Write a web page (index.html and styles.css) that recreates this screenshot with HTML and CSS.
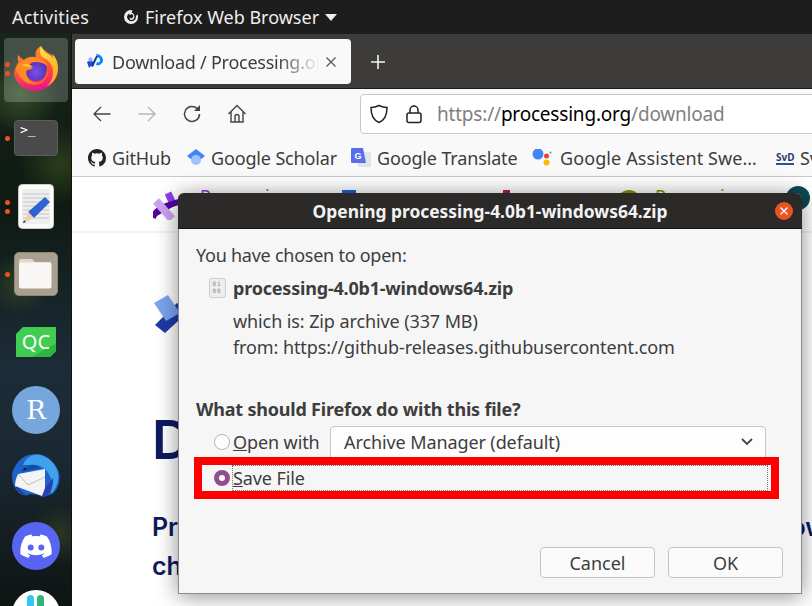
FILE: index.html
```html
<!DOCTYPE html>
<html>
	<head>
		<meta charset="utf-8" />
		<title>Download / Processing.org</title>
		<link rel="stylesheet" href="styles.css">
	</head>
	<body>
		<div class="topbar">
			<span class="activities">Activities</span>
			<span class="app-menu">
				<svg class="app-icon" width="16" height="16" viewBox="0 0 16 16"><path fill="#eee" d="M8 1a7 7 0 1 0 7 7c0-1-.2-1.900-.6-2.700L13 7a5 5 0 0 1-2 4.500A4.500 4.500 0 0 1 4 8c0-1.500 1-3 2.500-3.600L6 6l3-1 1.500 2L9 9.500 6.500 8.500 7.500 11c2 .5 4-1 4-3.200 0-2-1.500-3.800-3-4.300l1-1.800C9 1.300 8.500 1 8 1z"/></svg>
				Firefox Web Browser
				<i class="caret"></i>
			</span>
		</div>
		<div class="main">
			<div class="dock">
				<div class="dock-item active">
					<i class="dot dot-a"></i><i class="dot dot-b"></i>
					<svg width="48" height="48" viewBox="0 0 48 48">
						<defs>
							<linearGradient id="ffBase" x1="0.3" y1="0" x2="0.5" y2="1"><stop offset="0" stop-color="#ff9a1f"/><stop offset="0.6" stop-color="#ff4a3f"/><stop offset="1" stop-color="#e3158f"/></linearGradient>
							<linearGradient id="ffFlame" x1="0.3" y1="0" x2="0.7" y2="1"><stop offset="0" stop-color="#ffe04a"/><stop offset="1" stop-color="#ffa020"/></linearGradient>
							<radialGradient id="ffBall" cx="0.5" cy="0.6" r="0.6"><stop offset="0" stop-color="#7d52e6"/><stop offset="1" stop-color="#4f2bb0"/></radialGradient>
						</defs>
						<path fill="url(#ffBase)" d="M6 9c-.5 3-.5 5 .5 7C3.500 20 2 25 2 28c1.500 10 11 17 22 17s22-10 22-22c0-8-4-13-8-15-3-2-7-4-9-8-6 3-6 9-5 11-6-1-10 1-12 3-2-1-4-3-6-5z"/>
						<path fill="url(#ffFlame)" d="M29 0c-2 6-1 10 3 12 6 3 9 8 9 14 0 6-2 10-6 14 7-3 11-10 11-18 0-7-3-12-6-14l2 6c-3-5-6-6-8-7-2-2-4-4-5-7z"/>
						<circle cx="24" cy="24" r="11" fill="url(#ffBall)"/>
						<path fill="#ff8a24" d="M4 24c0-4 3-8 7-9 4-4 11-5 16-3 4 2 7 4 8 8-3-3-7-4-11-4-3 0-6 1-7 3l4 2c-1 2-3 3-6 3-2 3 0 8 4 11 4 2 9 2 13 0-5 5-14 5-20 0-4-3-6-7-8-11z"/>
						<path fill="#ffc93a" d="M10 19c3-2 7-1 10 1-3 1-7 1-10-1z"/>
						<path fill="#ff5a30" d="M35 20c2 5 1 11-3 15-5 4-11 5-16 2 7 1 13-1 16-5 2-3 3-7 3-12z"/>
					</svg>
				</div>
				<div class="dock-item">
					<i class="dot dot-one"></i>
					<div class="terminal-icon">&gt;_</div>
				</div>
				<div class="dock-item">
					<i class="dot dot-a2"></i><i class="dot dot-b2"></i>
					<svg width="36" height="45" viewBox="0 0 36 45">
						<rect x="0.500" y="0.500" width="35" height="44" rx="4" fill="#fbfbf9" stroke="#ccc"/>
						<rect x="4" y="5" width="28" height="35" fill="#efefef"/>
						<path stroke="#c4c4c4" fill="none" d="M5 10h26M5 14h26M5 18h26M5 22h26M5 26h26M5 30h26M5 34h26"/>
						<path fill="#2f62d3" d="M27 13l5 5-16 16-6-6z"/>
						<path fill="#f3cfa5" d="M10 28l6 6-9 4z"/>
						<path fill="#333" d="M5 39l3-1-2-2z"/>
					</svg>
				</div>
				<div class="dock-item">
					<i class="dot dot-one"></i>
					<div class="files-icon">
						<svg width="34" height="30" viewBox="0 0 34 30">
							<path fill="#dcd8cf" d="M2 0h11l3 3h16v8H0V2a2 2 0 0 1 2-2z"/>
							<rect x="0" y="3.500" width="32.500" height="26" rx="2" fill="#f8f7f5"/>
						</svg>
					</div>
				</div>
				<div class="dock-item">
					<svg width="40" height="30" viewBox="0 0 40 30">
						<path fill="#41cd52" d="M7 0h33v24l-6 6H0V7z"/>
						<path fill="#2cb53f" d="M16 30l24-14v8l-6 6z"/>
						<text x="20" y="22" class="qc-text">QC</text>
					</svg>
				</div>
				<div class="dock-item"><div class="round r-icon">R</div></div>
				<div class="dock-item">
					<svg width="48" height="48" viewBox="0 0 48 48">
						<path fill="#1f62c8" d="M8 6C4 10 0 16 0 22c0 6 2 12 7 17 5 3 8 3 11 1l16 2c6-1 10-4 12-10 3-7 2-15-3-21C38 4 32 0 24 0 17 0 12 2 8 6z"/>
						<path fill="#3fa2ec" d="M11 11C14 3 21 0 28 1c9 2 16 9 18 18 1 8-1 15-7 21 0-4 2-8 0-15-2-8-9-14-17-14-4 0-8 0-11 0z"/>
						<path fill="#1b3a9a" d="M4 28c2 7 6 11 12 14-4-1-9-3-12-8z"/>
						<path fill="#2c3fae" d="M33 34l8-10c1 7-2 14-8 19-2 0-4 0-6-1z"/>
						<path fill="#f4f4f4" d="M6 20l27-5v19l-3 8L3 32c0-4 1-8 3-12z"/>
						<path fill="none" stroke="#9aa" stroke-width="0.700" d="M6 20l10 11 17-8"/>
						<path fill="#0f4fa8" d="M9 16l9-5c4-1 8 0 10 3l-18 4z"/>
						<circle cx="13" cy="15" r="1.300" fill="#123"/>
					</svg>
				</div>
				<div class="dock-item">
					<div class="round discord-icon">
						<svg width="32" height="24" viewBox="0 0 32 24">
							<path fill="#fff" d="M27 2.500A26 26 0 0 0 20.500.500l-.8 1.700a24 24 0 0 0-7.400 0L11.500.500A26 26 0 0 0 5 2.500C1 8.500 0 14.500.4 20.300A26 26 0 0 0 8.400 24l1.700-2.700-2.600-1.300.6-.5a19 19 0 0 0 15.800 0l.6.500-2.600 1.300 1.700 2.700a26 26 0 0 0 8-3.700C32.100 13.600 30.600 7.700 27 2.500z"/>
							<circle cx="10.700" cy="13.500" r="3" fill="#5865f2"/>
							<circle cx="21.300" cy="13.500" r="3" fill="#5865f2"/>
						</svg>
					</div>
				</div>
				<div class="dock-item">
					<div class="round slack-icon">
						<svg width="24" height="16" viewBox="0 0 24 16">
							<rect x="3" y="0" width="7" height="14" rx="3.500" fill="#36c5f0"/>
							<rect x="13" y="0" width="7" height="14" rx="3.500" fill="#2eb67d"/>
						</svg>
					</div>
				</div>
			</div>

			<div class="browser">
				<div class="tabstrip">
					<div class="tab">
						<svg class="tab-logo" width="18" height="16" viewBox="0 0 18 16">
							<path fill="#1c4fd0" d="M1 8l4-2 3 3-5 5z"/>
							<path fill="#8fb0f5" d="M2 5l3-2 2 3-3 2z"/>
							<path fill="#0a84ff" d="M10 0c4 0 7 3 7 6 0 4-4 6-7 5l1-3c2 1 3 0 3-2s-2-3-3-3z"/>
							<path fill="#15339b" d="M12 2l-5 11-2-1 5-10z"/>
						</svg>
						<span class="tab-title">Download / Processing.org</span>
						<svg class="tab-close" width="12" height="12" viewBox="0 0 12 12"><path stroke="#555" stroke-width="1.200" d="M1.500 1.500l9 9M10.500 1.500l-9 9"/></svg>
					</div>
					<svg class="new-tab" width="16" height="16" viewBox="0 0 16 16"><path stroke="#f2f2f2" stroke-width="1.600" d="M8 1v14M1 8h14"/></svg>
				</div>
				<div class="navbar">
					<svg class="nav-btn" width="20" height="20" viewBox="0 0 20 20"><path fill="none" stroke="#444" stroke-width="1.300" d="M18.500 10H2M9 3l-7 7 7 7"/></svg>
					<svg class="nav-btn" width="20" height="20" viewBox="0 0 20 20"><path fill="none" stroke="#b5b5b5" stroke-width="1.300" d="M1.500 10H18M11 3l7 7-7 7"/></svg>
					<svg class="nav-btn" width="20" height="20" viewBox="0 0 20 20"><path fill="none" stroke="#444" stroke-width="1.500" d="M17.500 10a7.500 7.500 0 1 1-2.500-5.600L17 6"/><path fill="#444" d="M18 1v6h-6z"/></svg>
					<svg class="nav-btn" width="20" height="20" viewBox="0 0 20 20"><path fill="none" stroke="#444" stroke-width="1.400" d="M1.500 10L10 1.500 18.500 10M4 8v10h12V8M8 18v-5.500a2 2 0 0 1 4 0V18"/></svg>
					<div class="urlbar">
						<svg width="20" height="20" viewBox="0 0 20 20"><path fill="none" stroke="#222" stroke-width="1.500" d="M10 1.500c3 1.500 5.500 2 8 2 0 8-2 12.500-8 15-6-2.500-8-7-8-15 2.500 0 5-.5 8-2z"/></svg>
						<svg class="lock" width="16" height="20" viewBox="0 0 16 20"><path fill="none" stroke="#222" stroke-width="1.500" d="M4 9V6a4 4 0 0 1 8 0v3"/><rect x="1" y="9" width="14" height="9.500" rx="2" fill="none" stroke="#222" stroke-width="1.500"/></svg>
						<span class="url">https://<b>processing.org</b>/download</span>
					</div>
				</div>
				<div class="bookmarks">
					<span class="bm bm-github">
						<svg width="18" height="18" viewBox="0 0 16 16"><path fill="#222" d="M8 0C3.580 0 0 3.580 0 8c0 3.540 2.290 6.530 5.470 7.590.4.070.55-.17.55-.38v-1.340c-2.230.48-2.700-1.070-2.700-1.070-.36-.92-.89-1.170-.89-1.170-.73-.5.050-.49.050-.49.800.060 1.230.82 1.230.82.720 1.220 1.870.87 2.330.66.070-.52.280-.87.510-1.070-1.780-.2-3.640-.89-3.640-3.950 0-.87.310-1.590.82-2.150-.08-.2-.36-1.020.08-2.120 0 0 .67-.21 2.200.82a7.600 7.600 0 0 1 4 0c1.530-1.040 2.200-.82 2.200-.82.440 1.100.16 1.920.08 2.120.51.560.82 1.270.82 2.150 0 3.070-1.870 3.750-3.650 3.950.29.250.54.730.54 1.480v2.190c0 .21.150.46.550.38A8 8 0 0 0 16 8c0-4.420-3.580-8-8-8z"/></svg>
						GitHub
					</span>
					<span class="bm bm-scholar">
						<svg width="18" height="18" viewBox="0 0 18 18"><path fill="#4285f4" d="M9 0l9 7-9 7-9-7z"/><circle cx="9" cy="11" r="5" fill="#a0c3ff"/></svg>
						Google Scholar
					</span>
					<span class="bm bm-translate">
						<svg width="20" height="20" viewBox="0 0 20 20"><rect x="7" y="4" width="13" height="15" rx="1" fill="#e4e4e4"/><path fill="#5a6ff0" d="M1 0h11l3 15H1a1 1 0 0 1-1-1V1a1 1 0 0 1 1-1z"/><text x="7" y="11" class="g-text">G</text></svg>
						Google Translate
					</span>
					<span class="bm bm-assistant">
						<svg width="20" height="18" viewBox="0 0 20 18"><circle cx="6" cy="5" r="5.500" fill="#4285f4"/><circle cx="14.500" cy="7" r="2.500" fill="#ea4335"/><circle cx="14.500" cy="13.500" r="3" fill="#fbbc05"/><circle cx="18.500" cy="3.500" r="1" fill="#34a853"/></svg>
						Google Assistent Swe…
					</span>
					<span class="bm bm-svd">
						<span class="svd-logo">SvD</span>
						SvD
					</span>
				</div>
				<div class="page">
					<div class="site-nav">
						<span class="site-link link-a">
							<svg width="30" height="30" viewBox="0 0 30 30"><path stroke="#8c3ff0" stroke-width="7" d="M15 3l5 11"/><path stroke="#5501a4" stroke-width="6" d="M0 28c2-8 10-12 30-17"/><path stroke="#cba2f5" stroke-width="8" d="M3 11l16 18"/></svg>
							<span class="site-label purple">Processing</span>
						</span>
						<span class="site-link link-b"><i class="mark mark-blue"></i></span>
						<span class="site-link link-c"><i class="mark mark-pink"></i></span>
						<span class="site-link link-d">
							<i class="mark mark-green"></i>
							<span class="site-label green">Processing</span>
						</span>
						<span class="site-link link-e"><i class="mark mark-teal"></i></span>
					</div>
					<div class="hero">
						<svg class="hero-logo" width="40" height="40" viewBox="0 0 40 40"><path fill="#1e3aa8" d="M1 30l22-22 12 8-24 22z"/><path fill="#7ba4f0" d="M0 8L14 0l12 18-14 8z"/></svg>
						<h1>Download Processing</h1>
						<p class="intro">Processing is available on Linux, Mac OS X, and Windows<br>choose the version for your platform and get started</p>
					</div>
				</div>
			</div>
		</div>

		<div class="dialog">
			<div class="dialog-title">
				<span>Opening processing-4.0b1-windows64.zip</span>
				<svg class="dialog-close" width="18" height="18" viewBox="0 0 18 18"><circle cx="9" cy="9" r="9" fill="#e95420"/><path stroke="#fff" stroke-width="1.400" d="M5.500 5.500l7 7M12.500 5.500l-7 7"/></svg>
			</div>
			<div class="dialog-body">
				<div class="chosen">You have chosen to open:</div>
				<div class="file-row">
					<svg width="18" height="20" viewBox="0 0 18 20">
						<rect x="0.500" y="0.500" width="16" height="19" rx="2" fill="#eee" stroke="#ccc"/>
						<text x="3.500" y="8" class="bin-text">01</text>
						<text x="3.500" y="15" class="bin-text">00</text>
					</svg>
					<strong>processing-4.0b1-windows64.zip</strong>
				</div>
				<div class="file-info">
					<div>which is: Zip archive (337 MB)</div>
					<div>from: https://github-releases.githubusercontent.com</div>
				</div>
				<div class="question">What should Firefox do with this file?</div>
				<div class="open-row">
					<label class="radio-label"><i class="radio"></i><span class="mnemonic">Open with</span></label>
					<div class="select">
						<span>Archive Manager (default)</span>
						<svg width="12" height="8" viewBox="0 0 12 8"><path fill="none" stroke="#444" stroke-width="1.800" d="M1 1l5 5 5-5"/></svg>
					</div>
				</div>
				<div class="save-row">
					<i class="radio checked"></i>
					<span class="save-focus mnemonic">Save File</span>
				</div>
				<div class="buttons">
					<button class="btn">Cancel</button>
					<button class="btn">OK</button>
				</div>
			</div>
		</div>
	</body>
</html>
```

FILE: styles.css
```css
*{
	margin:0px;
	padding:0px;
	box-sizing:border-box;
}
html,body{
	width:812px;
	height:606px;
	overflow:hidden;
}
body{
	font-family:"Noto Sans","DejaVu Sans",sans-serif;
	font-size:18px;
	color:#3d3d3d;
	background:#fff;
	display:flex;
	flex-direction:column;
	position:relative;
}
.topbar{
	height:34px;
	flex:none;
	background:#1d1d1d;
	color:#eee;
	display:flex;
	align-items:center;
	padding-left:12px;
}
.activities{
	width:111px;
	letter-spacing:0.2px;
}
.app-menu{
	display:flex;
	align-items:center;
}
.app-icon{
	margin-right:6px;
}
.caret{
	width:0;
	height:0;
	margin-left:6px;
	border-left:6px solid transparent;
	border-right:6px solid transparent;
	border-top:7px solid #eee;
}
.main{
	flex:1;
	display:flex;
	min-height:0;
}

/* dock */
.dock{
	width:72px;
	flex:none;
	overflow:hidden;
	padding-top:4px;
	display:flex;
	flex-direction:column;
	gap:4px;
	border-right:1px solid #111;
	background:
		radial-gradient(circle at 20px 60px,#36502a 0,transparent 40px),
		radial-gradient(circle at 60px 130px,#2a3d1a 0,transparent 40px),
		radial-gradient(circle at 20px 250px,#2e3f22 0,transparent 30px),
		radial-gradient(circle at 60px 500px,#2c3620 0,transparent 30px),
		linear-gradient(#17251a 0,#0f1a12 30%,#1c2c38 58%,#1a2832 75%,#0e1412 100%);
}
.dock-item{
	height:64px;
	width:64px;
	margin-left:4px;
	flex:none;
	display:flex;
	align-items:center;
	justify-content:center;
	position:relative;
	border-radius:4px;
}
.dock-item.active{
	background:rgba(255,255,255,0.2);
}
.dot{
	position:absolute;
	left:1px;
	width:5px;
	height:5px;
	border-radius:50%;
	background:#e95420;
}
.dot-one{top:30px;}
.dot-a{top:24px;}
.dot-b{top:33px;}
.dot-a2{top:26px;}
.dot-b2{top:35px;}
.terminal-icon{
	width:44px;
	height:36px;
	background:#4a4a4a;
	border:1px solid #5c5c5c;
	border-radius:4px;
	color:#fff;
	font-family:"DejaVu Sans Mono",monospace;
	font-size:13px;
	line-height:14px;
	padding:2px 0 0 5px;
}
.files-icon{
	width:44px;
	height:44px;
	background:#a9a08f;
	border:1px solid #8d8676;
	border-radius:5px;
	display:flex;
	align-items:center;
	justify-content:center;
}
.qc-text{
	font-family:"Noto Sans",sans-serif;
	font-size:20px;
	fill:#fff;
	text-anchor:middle;
}
.round{
	width:48px;
	height:48px;
	border-radius:50%;
	display:flex;
	align-items:center;
	justify-content:center;
}
.r-icon{
	background:#75a7dc;
	color:#fff;
	font-family:"DejaVu Serif",serif;
	font-size:26px;
}
.discord-icon{
	background:#5865f2;
}
.slack-icon{
	background:#fff;
	align-items:flex-start;
	padding-top:5px;
}

/* browser */
.browser{
	flex:1;
	min-width:0;
	display:flex;
	flex-direction:column;
}
.tabstrip{
	height:55px;
	flex:none;
	background:#3d3c3a;
	border-bottom:1px solid #1c1b1b;
	display:flex;
	align-items:flex-start;
	padding:5px 0 0 3px;
}
.tab{
	width:276px;
	height:45px;
	background:#f9f9fa;
	border-radius:4px;
	display:flex;
	align-items:center;
	padding:0 14px 0 11px;
}
.tab-logo{
	flex:none;
	margin-right:8px;
}
.tab-title{
	flex:1;
	white-space:nowrap;
	overflow:hidden;
	letter-spacing:-0.25px;
	-webkit-mask-image:linear-gradient(to right,#000 80%,transparent 100%);
	mask-image:linear-gradient(to right,#000 80%,transparent 100%);
}
.tab-close{
	flex:none;
	margin-left:6px;
}
.new-tab{
	margin:15px 0 0 19px;
}
.navbar{
	height:49px;
	flex:none;
	background:#f9f9fa;
	display:flex;
	align-items:center;
	padding-left:20px;
	overflow:hidden;
}
.nav-btn{
	flex:none;
	margin-right:25px;
}
.urlbar{
	height:40px;
	flex:none;
	width:470px;
	margin-left:88px;
	background:#fff;
	border:1px solid #c8c8c8;
	border-radius:4px;
	display:flex;
	align-items:center;
	padding-left:8px;
	white-space:nowrap;
}
.lock{
	margin:0 15px 0 17px;
}
.url{
	color:#808080;
	font-size:19px;
	letter-spacing:-0.2px;
}
.url b{
	color:#000;
	font-weight:normal;
}
.bookmarks{
	height:39px;
	flex:none;
	background:#f9f9fa;
	border-bottom:1px solid #c9c9c9;
	display:flex;
	align-items:center;
	padding:2px 0 0 16px;
	white-space:nowrap;
	overflow:hidden;
	letter-spacing:-0.15px;
}
.bm{
	display:flex;
	align-items:center;
	gap:6px;
	flex:none;
}
.bm-github{width:99px;}
.bm-scholar{width:164px;}
.bm-translate{width:181px;}
.bm-assistant{
	width:244px;
	gap:8px;
	letter-spacing:0.1px;
}
.svd-logo{
	font-size:10px;
	width:18px;
	border-bottom:2px solid #2b4fa8;
	line-height:12px;
	color:#2b3a6a;
	font-weight:bold;
	letter-spacing:0;
}
.g-text{
	font-size:9px;
	fill:#fff;
	font-weight:bold;
	font-family:"Liberation Sans",sans-serif;
	text-anchor:middle;
}

/* page behind the dialog */
.page{
	flex:1;
	min-height:0;
	background:#fff;
	overflow:hidden;
}
.site-nav{
	height:56px;
	border-bottom:2px solid #f2f2f2;
	display:flex;
	padding:13px 0 0 81px;
	overflow:hidden;
}
.site-link{
	display:flex;
	gap:14px;
	flex:none;
	align-items:flex-start;
}
.link-a{width:189px;gap:17px;}
.link-b{width:161px;}
.link-c{width:114px;}
.link-d{width:173px;}
.site-label{
	font-size:18px;
	line-height:18px;
	margin-top:-3px;
}
.purple{color:#8c3ff0;}
.green{color:#7a9a00;}
.mark{
	display:block;
	width:24px;
	height:24px;
}
.mark-blue{
	background:#1e5fd8;
	width:14px;
}
.mark-pink{
	background:#b3155a;
	width:7px;
}
.mark-green{
	background:#7a9a00;
	border-radius:50%;
}
.mark-teal{
	background:#0c4a55;
	border-radius:50%;
	margin-top:-4px;
	margin-left:-4px;
}
.hero{
	padding:62px 0 0 80px;
	white-space:nowrap;
	color:#0d1a5f;
}
.hero-logo{
	display:block;
	margin-left:2px;
}
h1{
	font-family:"Inter","Liberation Sans",sans-serif;
	font-size:53px;
	line-height:64px;
	font-weight:600;
	margin-top:73px;
}
.intro{
	font-family:"Inter","Liberation Sans",sans-serif;
	font-size:25px;
	line-height:39px;
	font-weight:600;
	letter-spacing:-0.1px;
	margin-top:36px;
}

/* dialog */
.dialog{
	position:absolute;
	left:178px;
	top:193px;
	width:624px;
	height:401px;
	background:#f6f6f6;
	border:1px solid #8c8c8c;
	border-top:none;
	border-radius:6px 6px 0 0;
	box-shadow:0 2px 22px rgba(0,0,0,0.45);
	display:flex;
	flex-direction:column;
}
.dialog-title{
	height:36px;
	flex:none;
	margin:0 -1px;
	background:#2c2a29;
	border-bottom:1px solid #161616;
	border-radius:6px 6px 0 0;
	color:#f2f2f2;
	font-weight:bold;
	font-size:17.4px;
	display:flex;
	align-items:center;
	justify-content:center;
	position:relative;
}
.dialog-close{
	position:absolute;
	right:9px;
	top:9px;
}
.dialog-body{
	flex:1;
	padding:14px 18px 0 15px;
	display:flex;
	flex-direction:column;
	letter-spacing:-0.1px;
}
.chosen{
	line-height:24px;
	margin-left:2px;
	letter-spacing:-0.25px;
}
.file-row{
	display:flex;
	align-items:center;
	gap:6px;
	margin:9px 0 0 15px;
	height:24px;
	letter-spacing:-0.2px;
}
.bin-text{
	font-family:"DejaVu Sans Mono",monospace;
	font-size:6px;
	fill:#8a8a8a;
	letter-spacing:1px;
}
.file-info{
	margin:8px 0 0 39px;
	line-height:26px;
}
.question{
	font-weight:bold;
	margin:37px 0 0 2px;
	line-height:24px;
	letter-spacing:-0.2px;
}
.open-row{
	display:flex;
	align-items:flex-start;
	margin-top:5px;
	padding-left:20px;
	height:31px;
}
.radio-label{
	display:flex;
	align-items:center;
	height:32px;
	width:116px;
	flex:none;
}
.mnemonic::first-letter{
	text-decoration:underline;
}
.radio{
	display:block;
	flex:none;
	width:16px;
	height:16px;
	border-radius:50%;
	background:#fff;
	border:1px solid #b5b5b5;
	margin-right:3px;
}
.radio.checked{
	background:#fff;
	border:5px solid #924d8b;
	margin-right:2px;
}
.select{
	flex:none;
	width:436px;
	height:39px;
	margin-bottom:-8px;
	background:#fdfdfd;
	border:1px solid #c6c6c6;
	border-radius:4px;
	display:flex;
	align-items:center;
	justify-content:space-between;
	padding:0 12px 7px 13px;
}
.save-row{
	width:585px;
	height:42px;
	border:8px solid #f00;
	display:flex;
	align-items:center;
	padding:0 3px 0 12px;
}
.save-focus{
	flex:1;
	height:26px;
	line-height:24px;
	border:1px dotted #777;
}
.buttons{
	display:flex;
	justify-content:flex-end;
	gap:13px;
	margin-top:48px;
}
.btn{
	width:115px;
	height:31px;
	background:#fbfbfb;
	border:1px solid #c4c4c4;
	border-radius:4px;
	font:inherit;
	color:#3d3d3d;
}
```
